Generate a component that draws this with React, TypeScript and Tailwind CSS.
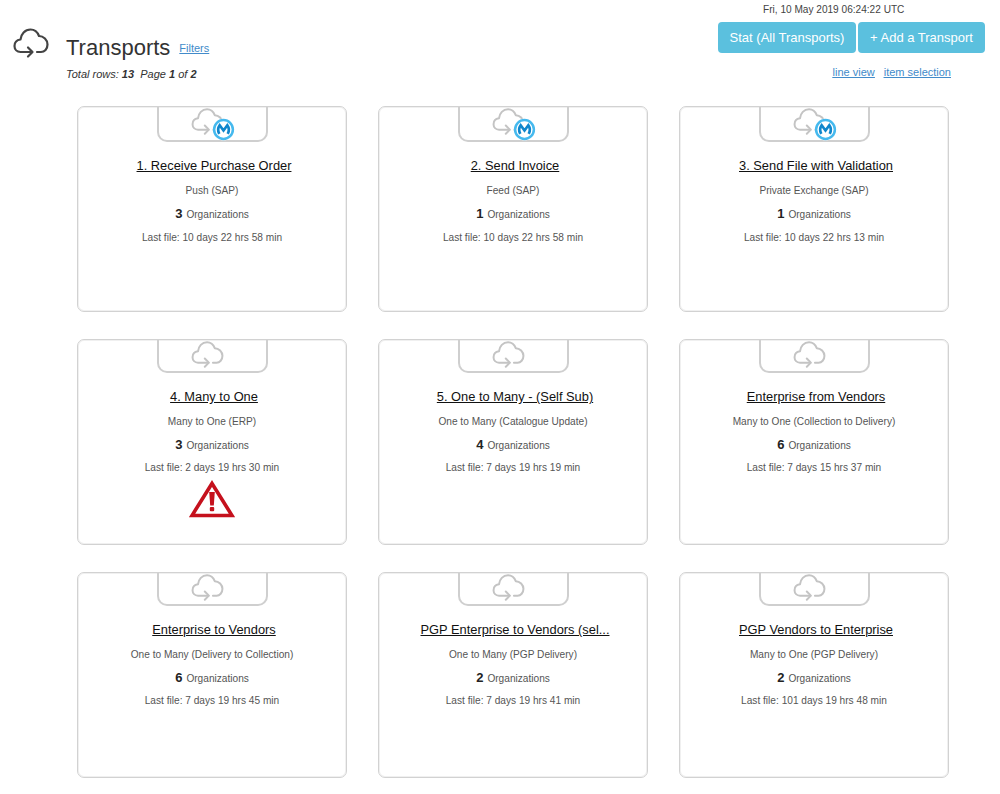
const cards = [
  { title: '1. Receive Purchase Order', type: 'Push (SAP)', orgs: 3, last: '10 days 22 hrs 58 min', mule: true },
  { title: '2. Send Invoice', type: 'Feed (SAP)', orgs: 1, last: '10 days 22 hrs 58 min', mule: true },
  { title: '3. Send File with Validation', type: 'Private Exchange (SAP)', orgs: 1, last: '10 days 22 hrs 13 min', mule: true },
  { title: '4. Many to One', type: 'Many to One (ERP)', orgs: 3, last: '2 days 19 hrs 30 min', warn: true },
  { title: '5. One to Many - (Self Sub)', type: 'One to Many (Catalogue Update)', orgs: 4, last: '7 days 19 hrs 19 min' },
  { title: 'Enterprise from Vendors', type: 'Many to One (Collection to Delivery)', orgs: 6, last: '7 days 15 hrs 37 min' },
  { title: 'Enterprise to Vendors', type: 'One to Many (Delivery to Collection)', orgs: 6, last: '7 days 19 hrs 45 min' },
  { title: 'PGP Enterprise to Vendors (sel...', type: 'One to Many (PGP Delivery)', orgs: 2, last: '7 days 19 hrs 41 min' },
  { title: 'PGP Vendors to Enterprise', type: 'Many to One (PGP Delivery)', orgs: 2, last: '101 days 19 hrs 48 min' },
]

function CloudIcon({ className }: { className: string }) {
  return (
    <svg viewBox="0 0 36 32" fill="none" stroke="currentColor" strokeWidth="2.2" strokeLinecap="round" strokeLinejoin="round" className={className}>
      <path d="M19 25H7.5C4 25 1.5 22.5 1.5 19C1.5 15.5 4 13 7.5 12.5C8 7 12 2.5 17.5 2.5C21.5 2.5 24.5 5 26 9C30.5 9 34.5 13 34.5 17.5C34.5 22 31.5 25 28 25H24" />
      <path d="M15 20.5L19.5 25L15 29.5" />
    </svg>
  )
}

function MuleBadge() {
  return (
    <svg viewBox="0 0 24 24" className="absolute left-[21px] top-[11px] h-[23px] w-[23px]">
      <circle cx="12" cy="12" r="11.5" fill="#fff" />
      <circle cx="12" cy="12" r="9.8" fill="#fff" stroke="#45b9ee" strokeWidth="2.6" />
      <path d="M7.6 16.5C6 13.5 6.2 10 8 7.5L12 13L16 7.5C17.8 10 18 13.5 16.4 16.5" fill="none" stroke="#0f86cc" strokeWidth="2.8" />
    </svg>
  )
}

function WarningIcon() {
  return (
    <svg viewBox="0 0 46 38" className="mx-auto mt-[5px] h-[38px] w-[46px]">
      <path d="M23 3.5L43 35.5H3Z" fill="#fff" stroke="#c5111d" strokeWidth="3.6" strokeLinejoin="miter" />
      <path d="M20.2 12H25.8L24.8 25.5H21.2Z" fill="#c5111d" />
      <rect x="20.8" y="27" width="4.4" height="4.2" rx="1" fill="#c5111d" />
    </svg>
  )
}

export default function App() {
  return (
    <div className="min-h-[794px] bg-white font-['Liberation_Sans',Arial,sans-serif] text-[#333]">
      <header className="flex h-[106px] justify-between pr-[15px]">
        <div className="flex pl-[13px] pt-[27px]">
          <CloudIcon className="h-[32px] w-[36px] text-[#444]" />
          <div className="ml-[17px] pt-[7px]">
            <div className="flex items-center gap-[9px]">
              <h1 className="text-[22px] leading-[28px] font-normal">Transports</h1>
              <a className="text-[11px] text-[#428bca] underline">Filters</a>
            </div>
            <p className="mt-[6px] text-[11px] leading-[13px] italic">
              Total rows: <b>13</b>&nbsp; Page <b>1</b> of <b>2</b>
            </p>
          </div>
        </div>
        <div className="flex w-[267px] flex-col">
          <p className="mt-[3px] ml-[45px] text-[10.1px] leading-[14px] text-[#444]">Fri, 10 May 2019 06:24:22 UTC</p>
          <div className="mt-[5px] flex gap-[2px]">
            <button className="h-[31px] w-[138px] rounded-[4px] bg-[#5bc0de] text-[13px] text-white">Stat (All Transports)</button>
            <button className="h-[31px] w-[127px] rounded-[4px] bg-[#5bc0de] text-[13px] text-white">+ Add a Transport</button>
          </div>
          <div className="mt-[12px] mr-[34px] flex justify-end gap-[9px] text-[11px] leading-[14px] text-[#428bca] underline">
            <a>line view</a>
            <a>item selection</a>
          </div>
        </div>
      </header>

      <main className="ml-[77px] grid w-[872px] grid-cols-[270px_270px_270px] gap-x-[31px] gap-y-[27px]">
        {cards.map((card) => (
          <div key={card.title} className="h-[206px] rounded-[7px] border border-[#d2d2d2] text-center shadow-[inset_0_0_0_1px_#f0f0f0]">
            <div className={`ml-[79px] flex w-[111px] justify-center rounded-b-[10px] border-2 border-t-0 border-[#cfcfcf] ${card.mule ? 'h-[35px]' : 'h-[33px]'}`}>
              <div className="relative h-[29px] w-[33px] -translate-x-[5px]">
                <CloudIcon className="h-[29px] w-[33px] text-[#c4c4c4]" />
                {card.mule && <MuleBadge />}
              </div>
            </div>
            <h2 className="mt-[15px] pl-[4px] text-[12.85px] leading-[18px] font-normal text-[#111] underline">{card.title}</h2>
            <p className="mt-[9px] text-[10.15px] leading-[14px] text-[#555]">{card.type}</p>
            <p className="mt-[8px] flex items-baseline justify-center gap-[4px] text-[10.15px] leading-[15px] text-[#555]">
              <b className="text-[13px] text-[#222]">{card.orgs}</b> Organizations
            </p>
            <p className={`text-[10.15px] leading-[14px] text-[#555] ${card.mule ? 'mt-[9px]' : 'mt-[8px]'}`}>Last file: {card.last}</p>
            {card.warn && <WarningIcon />}
          </div>
        ))}
      </main>
    </div>
  )
}
